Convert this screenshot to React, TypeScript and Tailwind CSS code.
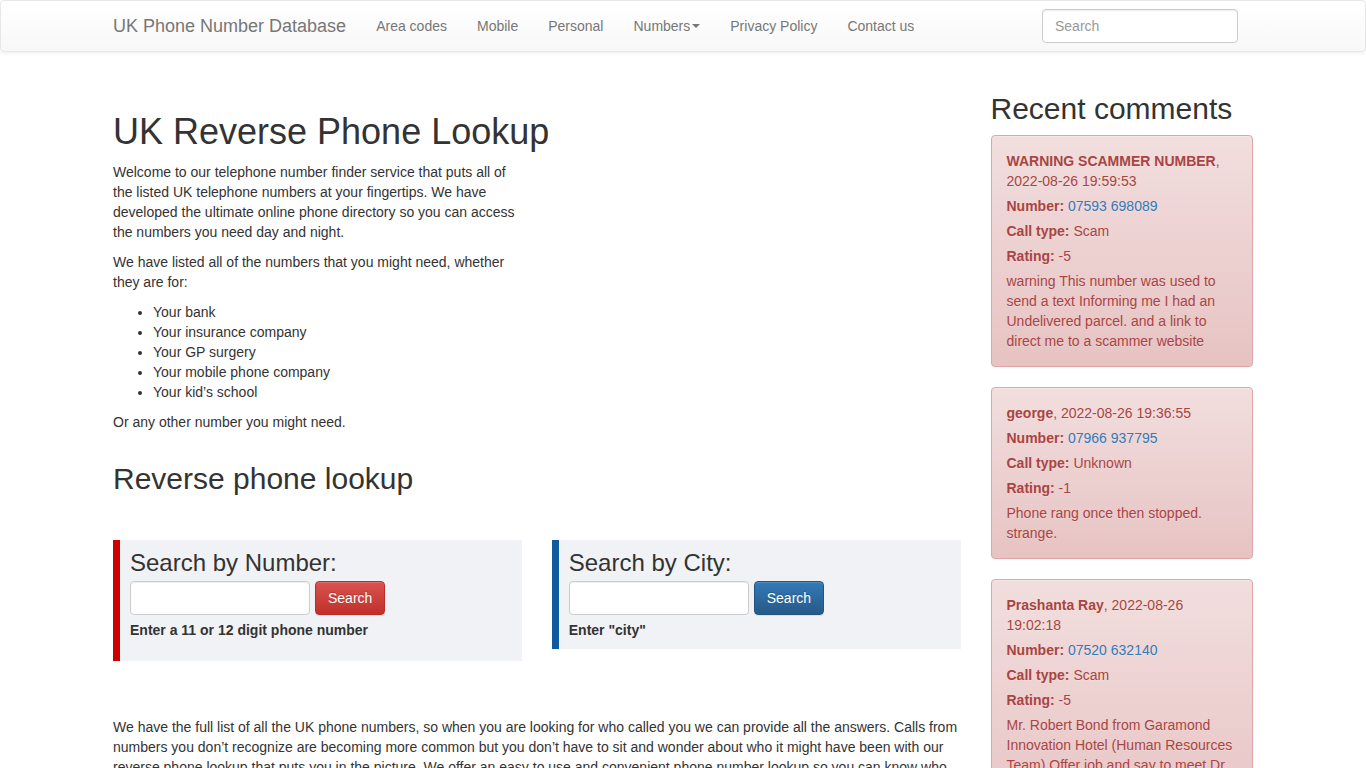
import React from "react";

const navLinks = ["Area codes", "Mobile", "Personal", "Numbers", "Privacy Policy", "Contact us"];

const comments = [
  {
    name: "WARNING SCAMMER NUMBER",
    date: "2022-08-26 19:59:53",
    number: "07593 698089",
    type: "Scam",
    rating: "-5",
    text: "warning This number was used to send a text Informing me I had an Undelivered parcel. and a link to direct me to a scammer website",
  },
  {
    name: "george",
    date: "2022-08-26 19:36:55",
    number: "07966 937795",
    type: "Unknown",
    rating: "-1",
    text: "Phone rang once then stopped. strange.",
  },
  {
    name: "Prashanta Ray",
    date: "2022-08-26 19:02:18",
    number: "07520 632140",
    type: "Scam",
    rating: "-5",
    text: "Mr. Robert Bond from Garamond Innovation Hotel (Human Resources Team) Offer job and say to meet Dr. Smith on WhatsApp for the interview. This is a scam.",
  },
];

function SearchBox({
  title,
  hint,
  variant,
}: {
  title: string;
  hint: string;
  variant: "red" | "blue";
}) {
  const red = variant === "red";
  return (
    <div
      className={
        red
          ? "border-l-[7px] border-[#cc0000] bg-[#f1f2f6] pt-[10px] pb-[21px] pl-[10px]"
          : "border-l-[7px] border-[#0e5a9c] bg-[#f1f2f6] pt-[10px] pb-[9px] pl-[10px]"
      }
    >
      <h3 className="text-2xl leading-[1.1] font-normal">{title}</h3>
      <div className="mt-[5px] flex gap-[5px]">
        <input
          type="text"
          className="h-[34px] w-[180px] rounded border border-[#ccc] bg-white px-3 shadow-[inset_0_1px_1px_rgba(0,0,0,0.075)] outline-none"
        />
        <button
          className={
            red
              ? "h-[34px] rounded border border-[#b92c28] bg-gradient-to-b from-[#d9534f] to-[#c12e2a] px-3 text-white [text-shadow:0_-1px_0_rgba(0,0,0,0.2)] shadow-[inset_0_1px_0_rgba(255,255,255,0.15),0_1px_1px_rgba(0,0,0,0.075)]"
              : "h-[34px] rounded border border-[#245580] bg-gradient-to-b from-[#337ab7] to-[#265a88] px-3 text-white [text-shadow:0_-1px_0_rgba(0,0,0,0.2)] shadow-[inset_0_1px_0_rgba(255,255,255,0.15),0_1px_1px_rgba(0,0,0,0.075)]"
          }
        >
          Search
        </button>
      </div>
      <p className="mt-[5px] font-bold">{hint}</p>
    </div>
  );
}

export default function App() {
  return (
    <div className="min-h-screen bg-white font-['Liberation_Sans',Arial,sans-serif] text-sm leading-5 text-[#333]">
      {/* Navbar */}
      <nav className="mb-5 h-[52px] rounded border border-[#e7e7e7] bg-gradient-to-b from-white to-[#f8f8f8] shadow-[inset_0_1px_0_rgba(255,255,255,0.15),0_1px_5px_rgba(0,0,0,0.075)]">
        <div className="mx-auto flex w-[1170px] px-[15px]">
          <a className="py-[15px] pr-[15px] text-lg leading-5 text-[#777] [text-shadow:0_1px_0_rgba(255,255,255,0.25)]">
            UK Phone Number Database
          </a>
          <ul className="flex">
            {navLinks.map((l) => (
              <li key={l}>
                <a className="flex items-center px-[15px] py-[15px] text-[#777] [text-shadow:0_1px_0_rgba(255,255,255,0.25)]">
                  {l}
                  {l === "Numbers" && (
                    <span className="ml-[2px] inline-block h-0 w-0 border-x-4 border-t-4 border-x-transparent border-t-[#777]"></span>
                  )}
                </a>
              </li>
            ))}
          </ul>
          <form className="ml-auto mr-[15px] pt-2">
            <input
              type="text"
              placeholder="Search"
              className="h-[34px] w-[196px] rounded border border-[#ccc] bg-white px-3 text-sm text-[#555] placeholder-[#999] shadow-[inset_0_1px_1px_rgba(0,0,0,0.075)] outline-none"
            />
          </form>
        </div>
      </nav>

      <div className="mx-auto w-[1170px] px-[15px]">
        <div className="-mx-[15px] flex">
          {/* Main column */}
          <div className="w-3/4 px-[15px]">
            <div className="-mx-[15px] flex">
              <div className="w-1/2 px-[15px]">
                <h1 className="mt-[40px] mb-2.5 whitespace-nowrap text-[36px] leading-[1.1] font-normal">
                  UK Reverse Phone Lookup
                </h1>
                <p className="mb-2.5">
                  Welcome to our telephone number finder service that puts all of the listed UK telephone numbers at
                  your fingertips. We have developed the ultimate online phone directory so you can access the numbers
                  you need day and night.
                </p>
                <p className="mb-2.5">We have listed all of the numbers that you might need, whether they are for:</p>
                <ul className="mb-2.5 list-disc pl-10">
                  <li>Your bank</li>
                  <li>Your insurance company</li>
                  <li>Your GP surgery</li>
                  <li>Your mobile phone company</li>
                  <li>Your kid’s school</li>
                </ul>
                <p className="mb-2.5">Or any other number you might need.</p>
                <h2 className="mt-[30px] mb-2.5 text-[30px] leading-[1.1] font-normal">Reverse phone lookup</h2>
              </div>
            </div>

            <div className="-mx-[15px] mt-[35px] flex items-start">
              <div className="w-1/2 px-[15px]">
                <SearchBox title="Search by Number:" hint="Enter a 11 or 12 digit phone number" variant="red" />
              </div>
              <div className="w-1/2 px-[15px]">
                <SearchBox title="Search by City:" hint={'Enter "city"'} variant="blue" />
              </div>
            </div>

            <p className="mt-14 mb-2.5">
              We have the full list of all the UK phone numbers, so when you are looking for who called you we can
              provide all the answers. Calls from numbers you don’t recognize are becoming more common but you don’t
              have to sit and wonder about who it might have been with our reverse phone lookup that puts you in the
              picture. We offer an easy to use and convenient phone number lookup so you can know who is calling before
              you pick up the phone.
            </p>
          </div>

          {/* Sidebar */}
          <div className="w-1/4 px-[15px]">
            <h2 className="mt-5 mb-2.5 text-[30px] leading-[1.1] font-normal">Recent comments</h2>
            {comments.map((c) => (
              <div
                key={c.number}
                className="mb-5 rounded border border-[#dca7a7] bg-gradient-to-b from-[#f2dede] to-[#e7c3c3] p-[15px] text-[#a94442] [text-shadow:0_1px_0_rgba(255,255,255,0.2)] shadow-[inset_0_1px_0_rgba(255,255,255,0.25),0_1px_2px_rgba(0,0,0,0.05)]"
              >
                <div className="mb-[5px]">
                  <b>{c.name}</b>, {c.date}
                </div>
                <div className="mb-[5px]">
                  <b>Number:</b> <a className="text-[#337ab7]">{c.number}</a>
                </div>
                <div className="mb-[5px]">
                  <b>Call type:</b> {c.type}
                </div>
                <div className="mb-[5px]">
                  <b>Rating:</b> {c.rating}
                </div>
                <div>{c.text}</div>
              </div>
            ))}
          </div>
        </div>
      </div>
    </div>
  );
}
